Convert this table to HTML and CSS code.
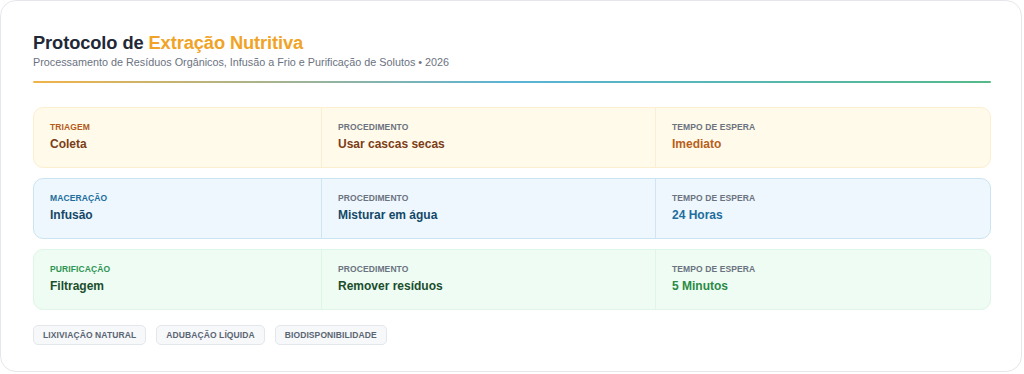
FILE: index.html
```html
<!DOCTYPE html>
<html lang="pt">
<head>
<meta charset="utf-8">
<link rel="stylesheet" href="styles.css">
</head>
<body>
<div class="card">
  <header class="head">
    <h1 class="title">Protocolo de <span class="accent">Extração Nutritiva</span></h1>
    <p class="subtitle">Processamento de Resíduos Orgânicos, Infusão a Frio e Purificação de Solutos • 2026</p>
  </header>
  <div class="rule"></div>
  <div class="rows">
    <div class="row amber">
      <div class="cell"><div class="label">Triagem</div><div class="value">Coleta</div></div>
      <div class="cell"><div class="label gray">Procedimento</div><div class="value">Usar cascas secas</div></div>
      <div class="cell"><div class="label gray">Tempo de espera</div><div class="value alt">Imediato</div></div>
    </div>
    <div class="row blue">
      <div class="cell"><div class="label">Maceração</div><div class="value">Infusão</div></div>
      <div class="cell"><div class="label gray">Procedimento</div><div class="value">Misturar em água</div></div>
      <div class="cell"><div class="label gray">Tempo de espera</div><div class="value alt">24 Horas</div></div>
    </div>
    <div class="row green">
      <div class="cell"><div class="label">Purificação</div><div class="value">Filtragem</div></div>
      <div class="cell"><div class="label gray">Procedimento</div><div class="value">Remover resíduos</div></div>
      <div class="cell"><div class="label gray">Tempo de espera</div><div class="value alt">5 Minutos</div></div>
    </div>
  </div>
  <div class="tags">
    <span class="tag">Lixiviação Natural</span>
    <span class="tag">Adubação Líquida</span>
    <span class="tag">Biodisponibilidade</span>
  </div>
</div>
</body>
</html>
```
FILE: styles.css
```css
* { box-sizing: border-box; }
html, body { margin: 0; padding: 0; background: #ffffff; }
body { font-family: "Liberation Sans", Arial, sans-serif; }

.card {
  width: 1022px;
  height: 372px;
  border: 1px solid #e5e7eb;
  border-radius: 16px;
  background: #fff;
  padding: 31px 31px 0 32px;
}

.head { margin: 0; }
.title {
  margin: 0;
  font-size: 18.3px;
  font-weight: 700;
  color: #1f2937;
  letter-spacing: -0.1px;
  line-height: 22px;
}
.accent { color: #f0a326; }
.subtitle {
  margin: 1px 0 0;
  font-size: 10.8px;
  color: #6b7280;
  line-height: 14px;
}

.rule {
  margin-top: 12px;
  height: 2px;
  width: 958px;
  background: linear-gradient(90deg, #f2b347 0%, #5ab3d6 50%, #55b98a 100%);
  border-radius: 1px;
}

.rows {
  margin-top: 24px;
  display: flex;
  flex-direction: column;
  gap: 10px;
  width: 958px;
}
.row {
  display: grid;
  grid-template-columns: 287px 334px 1fr;
  height: 61px;
  border-radius: 10px;
  border: 1px solid;
}
.cell {
  padding: 14px 16px 0;
  border-left: 1px solid;
}
.cell:first-child { border-left: none; }
.label {
  font-size: 8.5px;
  font-weight: 700;
  text-transform: uppercase;
  line-height: 11px;
  letter-spacing: 0.1px;
}
.label.gray { color: #6b7280; }
.value {
  margin-top: 4px;
  font-size: 12px;
  font-weight: 700;
  line-height: 15px;
}

.amber { background: #fffaea; border-color: #fbefd0; }
.amber .cell { border-color: #f8efd6; }
.amber .label { color: #b45a1a; }
.amber .label.gray { color: #6b7280; }
.amber .value { color: #7c3d17; }
.amber .value.alt { color: #b85f1c; }

.blue { background: #eef7fd; border-color: #cbe4f1; }
.blue .cell { border-color: #cfe5f1; }
.blue .label { color: #1b6d9c; }
.blue .label.gray { color: #6b7280; }
.blue .value { color: #134868; }
.blue .value.alt { color: #1d6d9d; }

.green { background: #eefcf3; border-color: #def5e7; }
.green .cell { border-color: #e0f5e8; }
.green .label { color: #2e9452; }
.green .label.gray { color: #6b7280; }
.green .value { color: #1a4d2c; }
.green .value.alt { color: #2b8a45; }

.tags {
  margin-top: 15px;
  display: flex;
  gap: 10px;
}
.tag {
  display: inline-block;
  font-size: 8.5px;
  font-weight: 700;
  text-transform: uppercase;
  color: #5b6573;
  background: #f6f8fa;
  border: 1px solid #e3e7ec;
  border-radius: 5px;
  padding: 4px 9px;
  line-height: 10px;
  letter-spacing: 0.1px;
}
```
